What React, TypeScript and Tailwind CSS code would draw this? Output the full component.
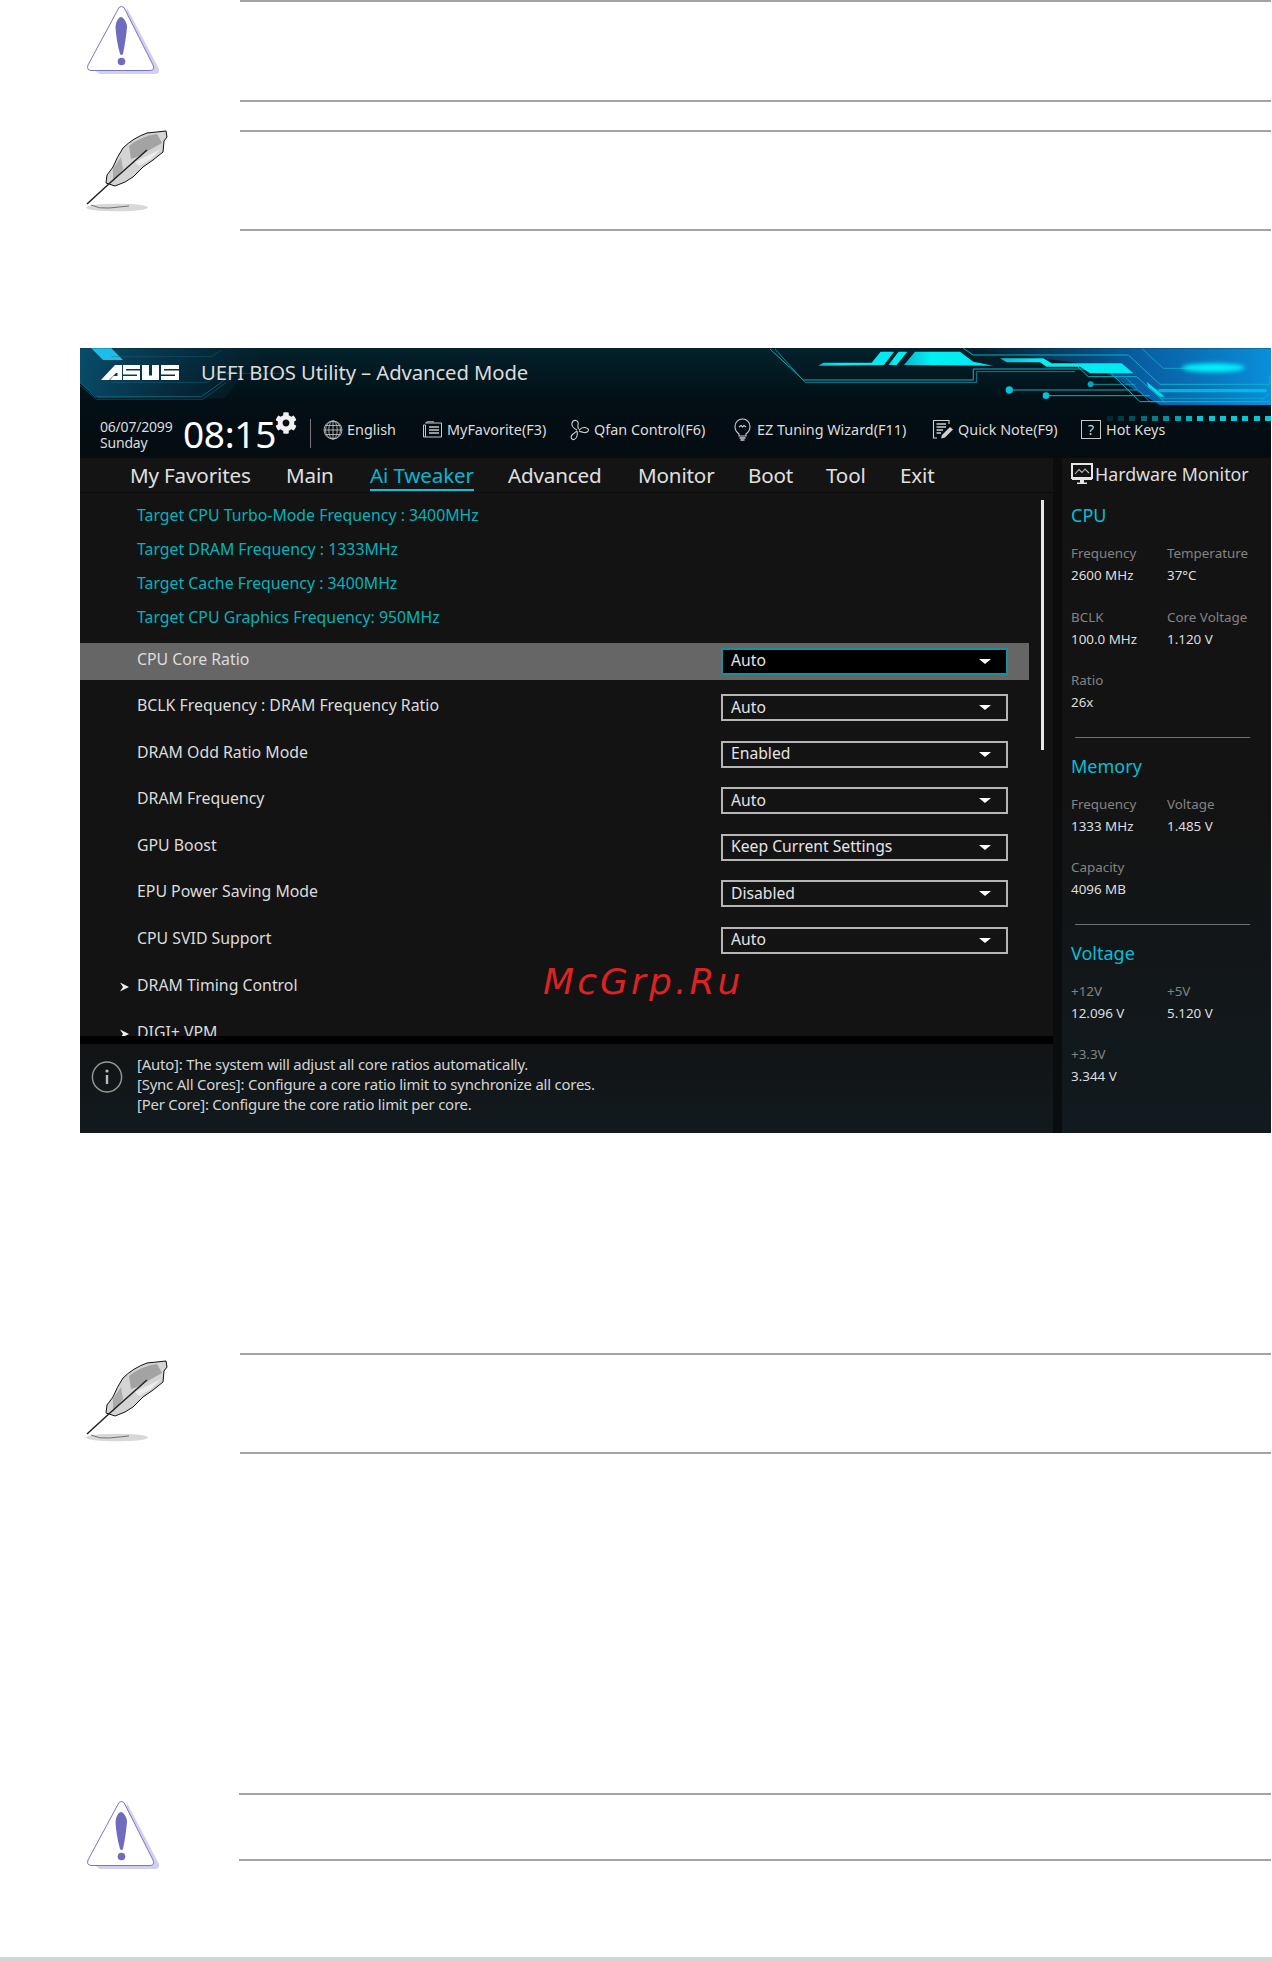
import { FaCog } from 'react-icons/fa';

const font = { fontFamily: '"Noto Sans", "Open Sans", sans-serif' };

function Warning() {
  return (
    <svg width="76" height="72" viewBox="0 0 76 72" className="block">
      <path d="M41 3 L73 64 Q74 69 69 69 L14 69 L8 65 L66 64 L40 8 Z" fill="#d3d0ec" />
      <path d="M33 2.5 Q35.5 0.5 38 2.5 L67 60 Q69 65.5 64 65.5 L6 65.5 Q0 65.5 2 60 Z" fill="#fff" stroke="#7a74cc" strokeWidth="1" />
      <path d="M33 13 Q35 11 37 13 Q41 17 41 22 Q40 34 37 49 Q35.5 51 34 49 Q30 34 29.5 22 Q30 16 33 13 Z" fill="#6f6cc0" />
      <circle cx="35.5" cy="56.5" r="3.8" fill="#6f6cc0" />
    </svg>
  );
}

function Feather() {
  return (
    <svg width="86" height="84" viewBox="0 0 86 84" className="block">
      <ellipse cx="32" cy="78.5" rx="31" ry="3.8" fill="#d8d8d8" />
      <path d="M6 76 Q14 80 24 79 Q34 78 44 77" fill="none" stroke="#666" strokeWidth="0.9" />
      <path d="M21 54 L22 46 L28 38 Q32 28 38 19 Q48 9 62 4 L81 2 L82 8 L79 12 L78 23 L68 31 L58 38 L48 48 L40 53 L30 57 Z" fill="#d4d4d4" stroke="#111" strokeWidth="1" />
      <path d="M44 17 Q56 7 72 5 L77 14 L52 28 L46 30 Z" fill="#a3a3a3" />
      <path d="M28 40 L36 28 L38 40 L28 53 Z" fill="#ababab" />
      <path d="M50 33 L76 20 L66 30 L54 37 Z" fill="#ececec" />
      <path d="M2 75 L26 53 L62 21" fill="none" stroke="#222" strokeWidth="1.5" />
    </svg>
  );
}

function Note({ children, h, col = 'w-[240px]' }: { children: React.ReactNode; h: string; col?: string }) {
  return (
    <div className="flex">
      <div className={`${col} shrink-0`}>{children}</div>
      <div className={`flex-1 mr-[1px] border-t-2 border-b-2 border-[#a3a3a3] ${h}`} />
    </div>
  );
}

function Decor() {
  return (
    <svg className="absolute left-0 top-0" width="1191" height="110" viewBox="0 0 1191 110">
      <defs>
        <linearGradient id="leftglow" x1="0" y1="0" x2="1" y2="0">
          <stop offset="0" stopColor="#0b5c80" stopOpacity="0.75" />
          <stop offset="1" stopColor="#0b4a68" stopOpacity="0" />
        </linearGradient>
        <linearGradient id="rightglow" x1="0" y1="0" x2="1" y2="0">
          <stop offset="0" stopColor="#0a5fa8" stopOpacity="0" />
          <stop offset="0.55" stopColor="#0a6cc0" stopOpacity="0.8" />
          <stop offset="1" stopColor="#0a90dc" stopOpacity="1" />
        </linearGradient>
        <linearGradient id="cyanbar" x1="0" y1="0" x2="1" y2="0">
          <stop offset="0" stopColor="#07b8d0" />
          <stop offset="0.3" stopColor="#00f0f4" />
          <stop offset="1" stopColor="#00e8f0" />
        </linearGradient>
        <filter id="soft" x="-20%" y="-100%" width="140%" height="300%"><feGaussianBlur stdDeviation="6" /></filter>
      </defs>
      <g transform="translate(-2,-3) scale(0.3333)">
        <path d="M0 10 H560 L440 160 H60 L0 110 Z" fill="url(#leftglow)" />
        <path d="M40 10 H100 L135 45 H75 Z" fill="#1dbde8" />
        <g fill="none" stroke="#0c6c88" strokeWidth="2.4">
          <path d="M5 110 L50 155 H370 L440 105" />
          <path d="M5 120 L55 163 H375 L445 112" opacity=".7" />
          <path d="M100 112 H390 L420 85 H640" opacity=".65" />
          <path d="M100 35 H400 L430 15" opacity=".5" />
        </g>
      </g>
      <g transform="translate(680,-3) scale(0.3333)">
        <path d="M620 10 H1540 V180 H1200 L1000 60 Z" fill="url(#rightglow)" />
        <g fill="none" stroke="#0fb0c4" strokeWidth="3">
          <path d="M30 12 L130 105 H640 V72 H950 L1040 72 L1140 170 H1530" />
          <path d="M45 12 L135 112 H650 V80 H945" opacity=".7" />
          <path d="M610 10 L640 30 H1105 L1200 118 H1530 L1530 90" />
          <path d="M1145 10 L1210 70 H1300" opacity=".8" />
          <path d="M950 62 L985 95 H1130 L1215 172" />
          <path d="M1100 100 L1170 170 H1500 L1530 145" opacity=".8" />
          <path d="M1200 160 H1510" opacity=".7" />
        </g>
        <g fill="url(#cyanbar)">
          <path d="M175 62 L190 53 H335 L362 20 H402 L372 60 Z" />
          <path d="M385 60 L416 20 H442 L410 60 Z" />
          <path d="M432 60 L465 20 H600 L640 50 L700 62 Z" />
          <path d="M720 40 H850 L875 55 H1085 L1120 85 H990 L960 65 H860 L840 52 H740 Z" />
        </g>
        <path d="M1160 110 L1215 155 H1200 L1165 125 Z" fill="#00e0e8" />
        <path d="M1195 132 H1520 V142 H1195 Z" fill="#00c8e0" opacity=".8" />
        <ellipse cx="1360" cy="68" rx="95" ry="13" fill="#00f4fa" filter="url(#soft)" />
        <g stroke="#0fb0c4" strokeWidth="3">
          <path d="M748 135 H1130" />
          <path d="M858 152 H1170" />
          <path d="M992 118 H1125" opacity=".8" />
        </g>
        <circle cx="748" cy="135" r="11" fill="#00c4da" />
        <circle cx="858" cy="152" r="10" fill="#00c4da" />
        <circle cx="992" cy="118" r="9" fill="#00a6ba" />
      </g>
    </svg>
  );
}

function Dots() {
  const ops = [0.15, 0.25, 0.35, 0.5, 0.6, 0.7, 0.8, 0.9, 1, 1, 1, 1, 1, 1, 1];
  return (
    <div className="absolute right-0 top-[68px] flex gap-[5.3px]">
      {ops.map((o, i) => (
        <span key={i} className="block w-[6px] h-[5px] bg-[#00c8d4]" style={{ opacity: o }} />
      ))}
    </div>
  );
}

function Asus() {
  return (
    <svg width="78" height="16" viewBox="0 0 78 16" className="block">
      <path d="M0 16 L14 1 H21 V16 H9 L12.5 12 H16.5 V9 H15 L8 16 Z" fill="#fff" />
      <path d="M22 1 H39 V5 H25 V6.4 H39 V16 H22 V12 H36 V10.6 H22 Z" fill="#fff" />
      <path d="M41 1 H48 V11.5 H51 V1 H58 V16 H41 Z" fill="#fff" />
      <path d="M60 1 H78 V5 H63 V6.4 H78 V16 H60 V12 H74 V10.6 H60 Z" fill="#fff" />
    </svg>
  );
}

const iconCls = 'block text-[#d8d8d8] shrink-0';

const IconGlobe = () => (
  <svg width="20" height="20" viewBox="0 0 20 20" fill="none" stroke="#bbb" strokeWidth="0.9" className={iconCls}>
    <circle cx="10" cy="10" r="9" />
    <ellipse cx="10" cy="10" rx="4.2" ry="9" />
    <ellipse cx="10" cy="10" rx="7.5" ry="9" />
    <path d="M10 1 V19 M1 10 H19 M2.3 5.5 H17.7 M2.3 14.5 H17.7" />
  </svg>
);
const IconFav = () => (
  <svg width="21" height="17" viewBox="0 0 21 17" fill="none" stroke="#c8c8c8" strokeWidth="1" className={iconCls}>
    <path d="M1.5 4 H3.5 V16 H1.5 Z M3.5 2 H19.5 V16 H3.5 M3.5 2 L5 0.8 H12" />
    <path d="M7 6 H17 M7 9 H17 M7 12 H17" strokeWidth="1.4" />
  </svg>
);
const IconFan = () => (
  <svg width="21" height="22" viewBox="0 0 21 22" fill="none" stroke="#d0d0d0" strokeWidth="1.1" className={iconCls}>
    <path d="M8 11 Q2 8 3 4 Q4 1 7 1.5 Q10 2.5 9 6 Q8.5 8 9.5 10" />
    <path d="M10 11 Q13 8 16 8.5 Q20 9.5 19.5 11.5 Q18.5 14 15 13.5 Q12 13 10 12" />
    <path d="M8 12 Q9 16 7 19 Q5 21.5 3 20 Q1 18 3.5 15.5 Q6 13.5 8 12" />
  </svg>
);
const IconBulb = () => (
  <svg width="17" height="24" viewBox="0 0 17 24" fill="none" stroke="#cfcfcf" strokeWidth="1.1" className={iconCls}>
    <path d="M5 16 Q1 13 1 8.5 A7.5 7.5 0 0 1 16 8.5 Q16 13 12 16 V18 H5 Z" />
    <path d="M5 9 L7 7.5 L8.5 9 L10 7.5 L12 9" />
    <path d="M5.5 20 H11.5 M6.5 22 H10.5" strokeWidth="1.4" />
  </svg>
);
const IconQuick = () => (
  <svg width="22" height="22" viewBox="0 0 22 22" fill="none" stroke="#d0d0d0" strokeWidth="1.1" className={iconCls}>
    <path d="M17 5 V1.5 H1.5 V19 H5" />
    <path d="M4.5 5 H14 M4.5 8 H14 M4.5 11 H11 M4.5 14 H9" strokeWidth="1.5" />
    <path d="M9 19.5 L10 16 L18 8 L21 10.5 L13 18.5 Z" fill="#d0d0d0" stroke="none" />
  </svg>
);
const IconHot = () => (
  <span className="flex items-center justify-center w-[20px] h-[19px] border border-[#c8c8c8] text-[#d8d8d8] text-[14px] leading-none shrink-0">?</span>
);
const IconMonitor = () => (
  <svg width="22" height="22" viewBox="0 0 22 22" className="block shrink-0">
    <path d="M1 1 H21 V15 H1 Z" fill="none" stroke="#e6e6e6" strokeWidth="2" />
    <path d="M1 15 H21 V17 H13 V19.5 H16 V21 H6 V19.5 H9 V17 H1 Z" fill="#e6e6e6" />
    <path d="M4 11 L8 6.5 L11 9.5 L14 6 L18 10" fill="none" stroke="#bbb" strokeWidth="1.1" />
  </svg>
);

const Tool = ({ icon, label, w, gap = 'gap-[4px]' }: { icon: React.ReactNode; label: string; w: string; gap?: string }) => (
  <div className={`flex items-center mb-[3px] ${gap} ${w} shrink-0`}>
    {icon}
    <span className="text-[14.4px] leading-[20px] text-[#dcdcdc] whitespace-nowrap">{label}</span>
  </div>
);

const tabs: [string, string][] = [
  ['My Favorites', 'w-[156px]'],
  ['Main', 'w-[84px]'],
  ['Ai Tweaker', 'w-[138px]'],
  ['Advanced', 'w-[130px]'],
  ['Monitor', 'w-[110px]'],
  ['Boot', 'w-[78px]'],
  ['Tool', 'w-[74px]'],
  ['Exit', 'w-[40px]'],
];

const rows: [string, string][] = [
  ['CPU Core Ratio', 'Auto'],
  ['BCLK Frequency : DRAM Frequency Ratio', 'Auto'],
  ['DRAM Odd Ratio Mode', 'Enabled'],
  ['DRAM Frequency', 'Auto'],
  ['GPU Boost', 'Keep Current Settings'],
  ['EPU Power Saving Mode', 'Disabled'],
  ['CPU SVID Support', 'Auto'],
];

const targets = [
  'Target CPU Turbo-Mode Frequency : 3400MHz',
  'Target DRAM Frequency : 1333MHz',
  'Target Cache Frequency : 3400MHz',
  'Target CPU Graphics Frequency: 950MHz',
];

function Metric({ k, v }: { k: string; v: string }) {
  return (
    <div className="h-[63.5px]">
      <div className="h-[22px] leading-[22px] text-[13.4px] text-[#838383] whitespace-nowrap">{k}</div>
      <div className="h-[22px] leading-[22px] text-[13.4px] text-[#dedede] whitespace-nowrap">{v}</div>
    </div>
  );
}

function SideTitle({ children, cls }: { children: React.ReactNode; cls: string }) {
  return <div className={`h-[26px] leading-[26px] text-[18px] text-[#00c0d8] ${cls}`}>{children}</div>;
}

export default function App() {
  return (
    <div className="relative w-[1272px] h-[1961px] bg-white overflow-hidden" style={font}>
      <Note h="h-[102px]">
        <div className="pl-[86px] pt-[5px]"><Warning /></div>
      </Note>
      <div className="mt-[28px]">
        <Note h="h-[101px]">
          <div className="pl-[85px] mt-[-1px]"><Feather /></div>
        </Note>
      </div>

      <div className="relative mt-[117px] ml-[80px] w-[1191px] h-[785px] bg-[#0a0c0d] overflow-hidden">
        <header className="relative h-[110px] bg-gradient-to-b from-[#04212c] via-[#020f15] to-[#040c10]">
          <Decor />
          <Dots />
          <div className="relative flex items-center h-[50px] pl-[21px] pb-[2px]">
            <Asus />
            <span className="ml-[22px] text-[20.3px] leading-[28px] text-[#dcdcdc] tracking-[-0.1px] whitespace-nowrap">UEFI BIOS Utility – Advanced Mode</span>
          </div>
          <div className="relative flex items-center h-[60px] pl-[20px] pt-[6px]">
            <div className="w-[83px] shrink-0 mt-[8px] text-[#dcdcdc] text-[14px] leading-[16.5px] tracking-[-0.2px]">
              <div>06/07/2099</div>
              <div>Sunday</div>
            </div>
            <div className="relative w-[92px] shrink-0 text-[37px] leading-[40px] text-white whitespace-nowrap pt-[6px] tracking-[-0.3px]">08:15</div>
            <FaCog className="mb-[16px] shrink-0" size={22} color="#f0f0f0" />
            <div className="ml-[13px] mt-[4px] w-px h-[29px] bg-[#777] shrink-0" />
            <div className="ml-[12px]"><Tool icon={<IconGlobe />} label="English" w="w-[99px]" /></div>
            <Tool icon={<IconFav />} label="MyFavorite(F3)" w="w-[147px]" />
            <Tool icon={<IconFan />} label="Qfan Control(F6)" w="w-[165px]" />
            <Tool icon={<IconBulb />} label="EZ Tuning Wizard(F11)" w="w-[198px]" gap="gap-[6px]" />
            <Tool icon={<IconQuick />} label="Quick Note(F9)" w="w-[149px]" />
            <Tool icon={<IconHot />} label="Hot Keys" w="w-[90px]" gap="gap-[5px]" />
          </div>
        </header>

        <div className="flex h-[675px]">
          <div className="relative w-[973px] shrink-0 flex flex-col">
            <nav className="flex h-[35px] items-center pl-[50px] bg-[#141414] border-b border-[#0a0a0a] shrink-0">
              {tabs.map(([t, w]) => (
                <div key={t} className={`${w} shrink-0 relative text-[20.6px] leading-[34px] whitespace-nowrap tracking-[-0.15px] ${t === 'Ai Tweaker' ? 'text-[#00b8d0]' : 'text-[#e0e0e0]'}`}>
                  <span className="relative inline-block">
                    {t}
                    {t === 'Ai Tweaker' && <span className="absolute left-0 right-0 bottom-[1px] h-[2px] bg-[#00c8de]" />}
                  </span>
                </div>
              ))}
            </nav>

            <div className="relative h-[543px] bg-[#131313] overflow-hidden shrink-0 pt-[4.5px]">
              {targets.map((t) => (
                <div key={t} className="h-[34px] leading-[34px] pl-[57px] text-[15.85px] text-[#00b4bd] whitespace-nowrap">{t}</div>
              ))}
              <div className="mt-[9.5px] flex flex-col gap-[9.5px] w-[949px]">
                {rows.map(([k, v], i) => (
                  <div key={k} className={`flex items-center h-[37px] pl-[57px] pr-[21px] ${i === 0 ? 'bg-[#666666]' : ''}`}>
                    <span className="text-[15.85px] text-[#dcdcdc] whitespace-nowrap pb-[4px]">{k}</span>
                    <div className={`ml-auto mb-[1px] flex items-center justify-between w-[287px] h-[27px] pl-[8px] pr-[15px] border-2 ${i === 0 ? 'bg-black border-[#1a8f9c]' : 'border-[#b5b5b5]'}`}>
                      <span className="text-[15.7px] text-[#e4e4e4] whitespace-nowrap">{v}</span>
                      <span className="block w-0 h-0 border-x-[6px] border-x-transparent border-t-[5px] border-t-white" />
                    </div>
                  </div>
                ))}
                {['DRAM Timing Control', 'DIGI+ VPM'].map((t) => (
                  <div key={t} className="flex items-center h-[37px] pl-[39px]">
                    <svg width="11" height="10" viewBox="0 0 11 10" className="block mr-[7px] shrink-0"><path d="M1 0.5 L10 5 L1 9.5 L4 5 Z" fill="#eee" /></svg>
                    <span className="text-[15.85px] text-[#dcdcdc] whitespace-nowrap pb-[2px]">{t}</span>
                  </div>
                ))}
              </div>
              <div className="absolute left-[961px] top-[7px] w-[3px] h-[250px] bg-[#e8e8e8]" />
              <div className="absolute left-[463px] top-[467px] text-[36px] leading-[44px] italic text-[#dc2222] tracking-[3.1px] whitespace-nowrap" style={{ fontFamily: '"DejaVu Sans", sans-serif', fontWeight: 300 }}>McGrp.Ru</div>
            </div>

            <div className="h-[8px] bg-black shrink-0" />
            <div className="flex-1 flex bg-gradient-to-b from-[#111314] to-[#121a1e]">
              <div className="w-[57px] shrink-0 pl-[11px] pt-[17px]">
                <svg width="32" height="32" viewBox="0 0 32 32" fill="none" className="block">
                  <ellipse cx="16" cy="16" rx="14.6" ry="15" stroke="#9a9a9a" strokeWidth="1.4" />
                  <circle cx="16" cy="10" r="1.6" fill="#bbb" />
                  <path d="M16 14 V23" stroke="#bbb" strokeWidth="2.4" />
                </svg>
              </div>
              <div className="pt-[10px] text-[14.9px] leading-[20px] text-[#d4d4d4] whitespace-nowrap tracking-[-0.2px]">
                <div>[Auto]: The system will adjust all core ratios automatically.</div>
                <div>[Sync All Cores]: Configure a core ratio limit to synchronize all cores.</div>
                <div>[Per Core]: Configure the core ratio limit per core.</div>
              </div>
            </div>
          </div>

          <div className="w-[9px] shrink-0 bg-[#0a0c0d]" />

          <aside className="flex-1 bg-gradient-to-b from-[#131313] via-[#131313] to-[#111a1f] pl-[9px] pr-[19px]">
            <div className="flex items-center h-[32px] gap-[2px] text-[17.8px] text-[#dedede] whitespace-nowrap">
              <IconMonitor />
              <span>Hardware Monitor</span>
            </div>
            <SideTitle cls="mt-[12px]">CPU</SideTitle>
            <div className="mt-[14px] grid grid-cols-[96px_1fr]">
              <Metric k="Frequency" v="2600 MHz" />
              <Metric k="Temperature" v="37°C" />
              <Metric k="BCLK" v="100.0 MHz" />
              <Metric k="Core Voltage" v="1.120 V" />
              <Metric k="Ratio" v="26x" />
            </div>
            <div className="mt-[4px] ml-[4px] mr-[2px] h-px bg-[#6a7278]" />
            <SideTitle cls="mt-[15px]">Memory</SideTitle>
            <div className="mt-[14px] grid grid-cols-[96px_1fr]">
              <Metric k="Frequency" v="1333 MHz" />
              <Metric k="Voltage" v="1.485 V" />
              <Metric k="Capacity" v="4096 MB" />
            </div>
            <div className="mt-[4px] ml-[4px] mr-[2px] h-px bg-[#6a7278]" />
            <SideTitle cls="mt-[15px]">Voltage</SideTitle>
            <div className="mt-[14px] grid grid-cols-[96px_1fr]">
              <Metric k="+12V" v="12.096 V" />
              <Metric k="+5V" v="5.120 V" />
              <Metric k="+3.3V" v="3.344 V" />
            </div>
          </aside>
        </div>
      </div>

      <div className="mt-[220px]">
        <Note h="h-[101px]">
          <div className="pl-[85px] pt-[6px]"><Feather /></div>
        </Note>
      </div>
      <div className="mt-[339px]">
        <Note h="h-[68px]" col="w-[239px]">
          <div className="pl-[86px] pt-[7px]"><Warning /></div>
        </Note>
      </div>
      <div className="absolute left-0 right-0 bottom-0 h-[4px] bg-[#d4d4d4]" />
    </div>
  );
}
